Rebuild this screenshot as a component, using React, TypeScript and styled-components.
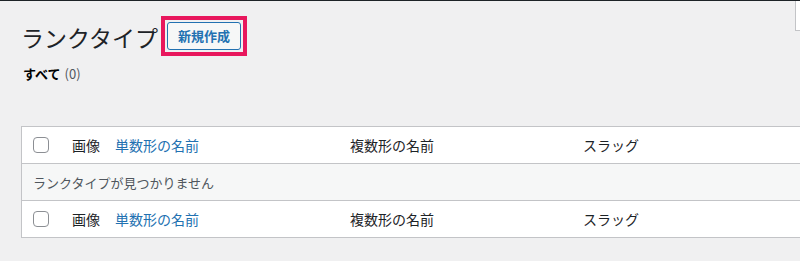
import React from "react";
import styled, { createGlobalStyle } from "styled-components";

const Global = createGlobalStyle`
  html, body {
    margin: 0;
    padding: 0;
    background: #f0f0f1;
    overflow: hidden;
    width: 800px;
    height: 261px;
  }
  body {
    font-family: "Noto Sans CJK JP", "Noto Sans", sans-serif;
    color: #1d2327;
  }
`;

const Page = styled.div`
  position: relative;
  height: 261px;
  border-top: 1px solid #1d2327;
  box-sizing: border-box;
`;

const ScreenTab = styled.div`
  position: absolute;
  top: 0;
  left: 795px;
  width: 20px;
  height: 29px;
  background: #fff;
  border: 1px solid #c3c4c7;
  border-top: none;
`;

const Wrap = styled.div`
  padding-left: 21px;
  display: flex;
  flex-direction: column;
`;

const HeadingRow = styled.div`
  display: flex;
  align-items: center;
  margin-top: 14px;
  height: 41px;
`;

const Title = styled.h1`
  margin: 0;
  font-size: 23px;
  font-weight: 400;
  line-height: 30px;
  color: #1d2327;
  padding-top: 3px;
`;

const Highlight = styled.div`
  margin-left: 3px;
  border: 4px solid #e8175d;
  padding: 2px;
  display: flex;
`;

const ActionButton = styled.a`
  display: inline-block;
  border: 1px solid #2271b1;
  border-radius: 3px;
  background: #f6f7f7;
  color: #2271b1;
  font-size: 13px;
  font-weight: 700;
  line-height: 20px;
  padding: 3px 10px;
  text-decoration: none;
`;

const Subsub = styled.div`
  margin-top: 8px;
  font-size: 13px;
  line-height: 20px;
  display: flex;
  align-items: center;
  gap: 4px;
  padding-left: 2px;
`;

const Current = styled.span`
  font-weight: 700;
  color: #000;
`;

const Count = styled.span`
  color: #50575e;
  font-weight: 400;
  font-size: 13px;
`;

const Table = styled.div`
  margin-top: 42px;
  width: 800px;
  background: #fff;
  border: 1px solid #c3c4c7;
  border-right: none;
`;

const Row = styled.div<{ $last?: boolean }>`
  display: grid;
  grid-template-columns: 40px 43px 235px 233px 1fr;
  height: 36px;
  align-items: center;
  border-bottom: ${(p) => (p.$last ? "none" : "1px solid #c3c4c7")};
  font-size: 14px;
  color: #1d2327;
`;

const EmptyRow = styled.div`
  height: 36px;
  display: flex;
  align-items: center;
  background: #f6f7f7;
  border-bottom: 1px solid #c3c4c7;
  padding-left: 11px;
  font-size: 13px;
  color: #50575e;
`;

const Cell = styled.div<{ $link?: boolean }>`
  padding-left: 10px;
  color: ${(p) => (p.$link ? "#2271b1" : "#1d2327")};
  white-space: nowrap;
`;

const CheckCell = styled.div`
  padding-left: 11px;
  display: flex;
  align-items: center;
`;

const Check = styled.span`
  width: 16px;
  height: 16px;
  box-sizing: border-box;
  border: 1px solid #8c8f94;
  border-radius: 4px;
  background: #fff;
`;

function HeaderRow({ last }: { last?: boolean }) {
  return (
    <Row $last={last}>
      <CheckCell>
        <Check />
      </CheckCell>
      <Cell>画像</Cell>
      <Cell $link>単数形の名前</Cell>
      <Cell>複数形の名前</Cell>
      <Cell>スラッグ</Cell>
    </Row>
  );
}

export default function App() {
  return (
    <>
      <Global />
      <Page>
        <ScreenTab />
        <Wrap>
          <HeadingRow>
            <Title>ランクタイプ</Title>
            <Highlight>
              <ActionButton href="#">新規作成</ActionButton>
            </Highlight>
          </HeadingRow>
          <Subsub>
            <Current>すべて</Current>
            <Count>(0)</Count>
          </Subsub>
          <Table>
            <HeaderRow />
            <EmptyRow>ランクタイプが見つかりません</EmptyRow>
            <HeaderRow last />
          </Table>
        </Wrap>
      </Page>
    </>
  );
}
